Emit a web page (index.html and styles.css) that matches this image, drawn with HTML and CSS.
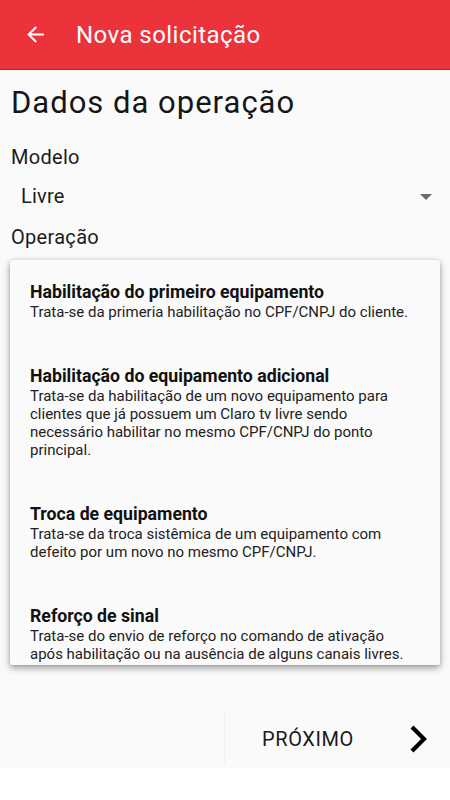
FILE: index.html
```html
<!DOCTYPE html>
<html lang="pt">
<head>
<meta charset="utf-8">
<link rel="stylesheet" href="styles.css">
</head>
<body>
<div class="app">
  <header class="toolbar">
    <svg class="back" width="24" height="24" viewBox="0 0 24 24"><path d="M20 11H7.83l5.59-5.59L12 4l-8 8 8 8 1.41-1.41L7.83 13H20v-2z" fill="#fff"/></svg>
    <span class="title">Nova solicitação</span>
  </header>
  <main class="content">
    <h1 class="heading">Dados da operação</h1>
    <div class="label">Modelo</div>
    <div class="select">
      <span class="select-value">Livre</span>
      <span class="caret"></span>
    </div>
    <div class="label label-op">Operação</div>
  </main>
  <div class="popup">
    <div class="item">
      <div class="item-title">Habilitação do primeiro equipamento</div>
      <div class="item-desc">Trata-se da primeria habilitação no CPF/CNPJ do cliente.</div>
    </div>
    <div class="item">
      <div class="item-title">Habilitação do equipamento adicional</div>
      <div class="item-desc">Trata-se da habilitação de um novo equipamento para clientes que já possuem um Claro tv livre sendo necessário habilitar no mesmo CPF/CNPJ do ponto principal.</div>
    </div>
    <div class="item">
      <div class="item-title">Troca de equipamento</div>
      <div class="item-desc">Trata-se da troca sistêmica de um equipamento com defeito por um novo no mesmo CPF/CNPJ.</div>
    </div>
    <div class="item">
      <div class="item-title">Reforço de sinal</div>
      <div class="item-desc">Trata-se do envio de reforço no comando de ativação após habilitação ou na ausência de alguns canais livres.</div>
    </div>
  </div>
  <footer class="footer">
    <div class="footer-left"></div>
    <div class="next">
      <span class="next-label">PRÓXIMO</span>
      <svg class="chev" width="24" height="32" viewBox="0 0 24 32"><path d="M5 4 L17 16 L5 28" fill="none" stroke="#000" stroke-width="4.2"/></svg>
    </div>
  </footer>
</div>
</body>
</html>
```

FILE: styles.css
```css
* { box-sizing: border-box; }
html, body { margin: 0; padding: 0; background: #ffffff; }
body { font-family: Roboto, "Noto Sans", sans-serif; color: #1a1a1a; }

.app {
  position: relative;
  width: 450px;
  height: 768px;
  background: #fafafa;
  display: flex;
  flex-direction: column;
}

.toolbar {
  height: 70px;
  background: #ec323b;
  border-bottom: 1px solid #d9161e;
  display: flex;
  align-items: center;
  padding-left: 23px;
  flex-shrink: 0;
}
.back { width: 25px; height: 25px; }
.title {
  color: #ffffff;
  font-size: 24px;
  margin-left: 28px;
  letter-spacing: 0.45px;
}

.content { padding: 0 11px; }
.heading {
  margin: 15px 0 0;
  font-size: 31px;
  font-weight: 400;
  line-height: 36px;
  letter-spacing: 1px;
  color: #161616;
}
.label {
  font-size: 20px;
  line-height: 24px;
  margin-top: 24px;
  letter-spacing: 0.3px;
  color: #1c1c1c;
}
.select {
  display: flex;
  align-items: center;
  justify-content: space-between;
  height: 30px;
  margin-top: 12px;
  padding-left: 10px;
  padding-right: 7px;
}
.select-value { font-size: 20px; color: #1c1c1c; letter-spacing: 0.2px; }
.caret {
  width: 0; height: 0;
  border-left: 6px solid transparent;
  border-right: 6px solid transparent;
  border-top: 6px solid #6a6a6a;
  margin-top: 2px;
}
.label-op { margin-top: 14px; }

.popup {
  position: absolute;
  left: 10px;
  top: 260px;
  width: 430px;
  height: 405px;
  background: #fafafa;
  box-shadow: 0 3px 7px rgba(0,0,0,0.38), 0 0 3px rgba(0,0,0,0.12);
  border-radius: 2px;
  overflow: hidden;
}
.item { padding: 22px 20px 23px 20px; }
.item-title {
  font-size: 17.7px;
  font-weight: 700;
  line-height: 20px;
  color: #111;
}
.item-desc {
  font-size: 15px;
  line-height: 18px;
  margin-top: 1px;
  color: #222;
}

.footer {
  margin-top: auto;
  margin-left: 5px;
  margin-right: 5px;
  height: 59px;
  border-top: 1px solid #ffffff;
  display: flex;
  padding-top: 3px;
  padding-bottom: 4px;
}
.footer-left { width: 219px; }
.next {
  flex: 1;
  border-left: 1px solid #f0f0f0;
  display: flex;
  align-items: center;
  padding-left: 37px;
}
.next-label {
  font-size: 20px;
  color: #1a1a1a;
  letter-spacing: 0.6px;
}
.chev { margin-left: auto; margin-right: 14px; }
```
